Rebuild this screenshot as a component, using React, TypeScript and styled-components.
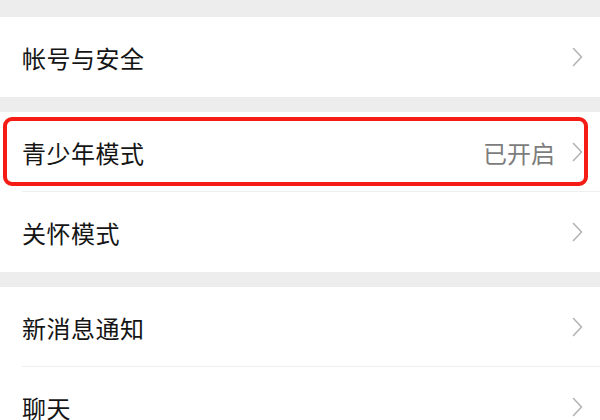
import * as React from "react";
import styled, { createGlobalStyle } from "styled-components";

const GlobalStyle = createGlobalStyle`
  html, body {
    margin: 0;
    padding: 0;
    background: #ededed;
  }
  body {
    font-family: "Noto Sans CJK SC", "Noto Sans", sans-serif;
  }
`;

const Page = styled.div`
  width: 600px;
  height: 420px;
  overflow: hidden;
  background: #ededed;
  padding-top: 17px;
  box-sizing: border-box;
  display: flex;
  flex-direction: column;
  gap: 15px;
`;

const Group = styled.div`
  background: #ffffff;
  display: flex;
  flex-direction: column;
`;

const Row = styled.div<{ $divider?: boolean }>`
  position: relative;
  height: 80px;
  display: flex;
  align-items: center;
  padding: 0 17px 0 22px;
  box-sizing: border-box;
  ${(p) =>
    p.$divider &&
    `
    &::after {
      content: "";
      position: absolute;
      left: 22px;
      right: 0;
      bottom: 0;
      height: 1px;
      background: #efefef;
    }
  `}
`;

const Label = styled.span`
  flex: 1;
  font-size: 24px;
  color: #151515;
  letter-spacing: 0.5px;
`;

const Status = styled.span`
  font-size: 24px;
  color: #7d7d7d;
  margin-right: 17px;
`;

const Highlight = styled.div`
  position: absolute;
  top: 5px;
  left: 3px;
  right: 12px;
  bottom: 6px;
  border: 4.5px solid #f41c14;
  border-radius: 9px;
  pointer-events: none;
`;

const Chevron = () => (
  <svg width="11" height="20" viewBox="0 0 11 20">
    <polyline
      points="1.5,1.5 9.5,10 1.5,18.5"
      fill="none"
      stroke="#b4b4b4"
      strokeWidth="1.6"
      strokeLinecap="round"
      strokeLinejoin="round"
    />
  </svg>
);

type Item = { label: string; status?: string; highlight?: boolean };

const groups: Item[][] = [
  [{ label: "帐号与安全" }],
  [{ label: "青少年模式", status: "已开启", highlight: true }, { label: "关怀模式" }],
  [{ label: "新消息通知" }, { label: "聊天" }],
];

export default function App() {
  return (
    <>
      <GlobalStyle />
      <Page>
        {groups.map((items, gi) => (
          <Group key={gi}>
            {items.map((item, i) => (
              <Row key={item.label} $divider={i < items.length - 1}>
                <Label>{item.label}</Label>
                {item.status && <Status>{item.status}</Status>}
                <Chevron />
                {item.highlight && <Highlight />}
              </Row>
            ))}
          </Group>
        ))}
      </Page>
    </>
  );
}
